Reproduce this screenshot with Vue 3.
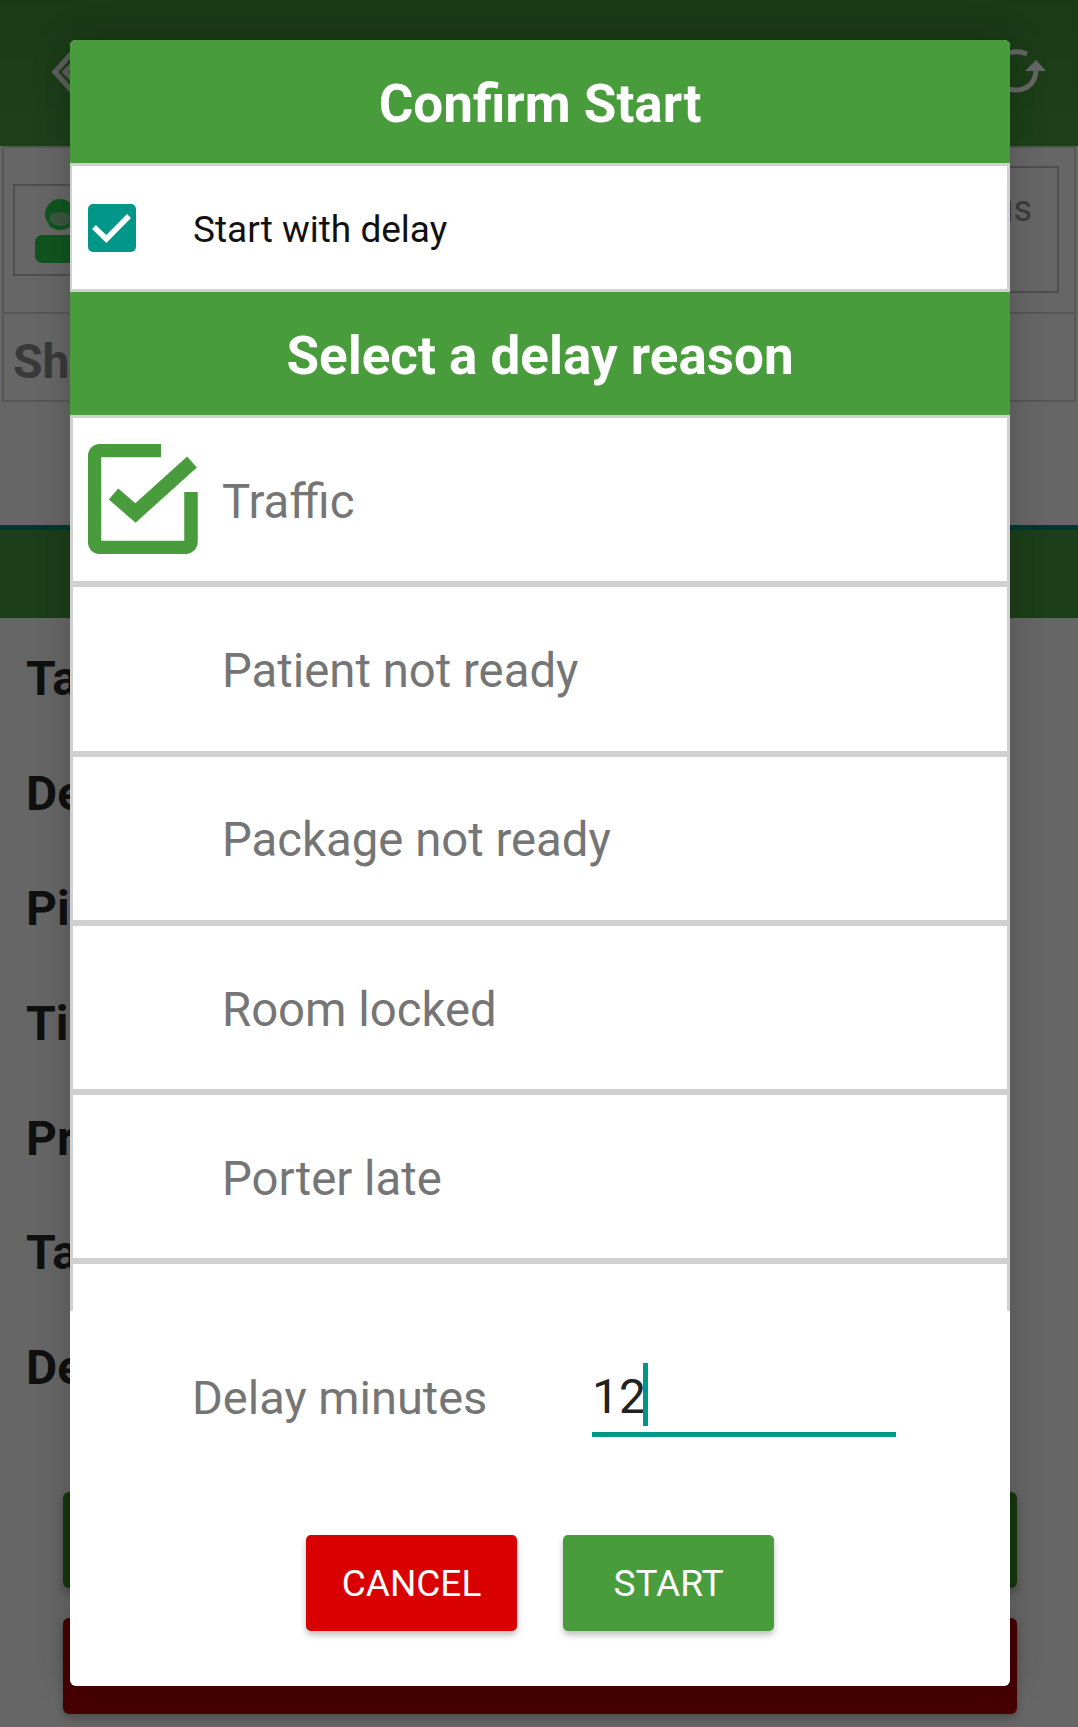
<script setup>
const behindLabels = ['Ta', 'De', 'Pi', 'Ti', 'Pr', 'Ta', 'De']
const reasons = [
  { label: 'Traffic', checked: true },
  { label: 'Patient not ready', checked: false },
  { label: 'Package not ready', checked: false },
  { label: 'Room locked', checked: false },
  { label: 'Porter late', checked: false },
]
</script>

<template>
  <div class="screen">
    <div class="page">
      <header class="appbar">
        <svg class="back" viewBox="0 0 22 44" width="22" height="44">
          <path d="M20 3 3 22l17 19M20 15l-7 7 7 7" fill="none" stroke="#e6f0e6" stroke-width="5" />
        </svg>
        <svg class="refresh" viewBox="0 0 50 50" width="50" height="50">
          <path d="M10 8q8-3 17 1M8 44c16 4 28-4 28-20" fill="none" stroke="#fff" stroke-width="5" />
          <path d="M36 15 25 26h21z" fill="#fff" />
        </svg>
      </header>
      <section class="profile">
        <div class="photo">
          <svg viewBox="0 0 50 70" width="50" height="70">
            <circle cx="30" cy="19" r="15" fill="#2ad44e" />
            <ellipse cx="30" cy="24" rx="11" ry="7" fill="#9ad8a8" />
            <path d="M19 25q11 13 22 0v6q-11 8-22 0z" fill="#2ad44e" />
            <rect x="5" y="40" width="50" height="28" rx="7" fill="#2ad44e" />
          </svg>
        </div>
        <div class="status">us</div>
      </section>
      <section class="shift">Sh</section>
      <div class="spacer"></div>
      <div class="band"></div>
      <ul class="details">
        <li v-for="(label, i) in behindLabels" :key="i">{{ label }}</li>
      </ul>
      <div class="bg-actions">
        <div class="bg-green"></div>
        <div class="bg-red"></div>
      </div>
    </div>

    <div class="scrim"></div>

    <div class="dialog">
      <h2 class="title">Confirm Start</h2>
      <div class="bordered delay-row">
        <span class="box">
          <svg viewBox="0 0 48 48" width="48" height="48">
            <path d="M6 23 18.300 35 41 12" fill="none" stroke="#fff" stroke-width="5.500" />
          </svg>
        </span>
        <span class="delay-text">Start with delay</span>
      </div>
      <h2 class="title">Select a delay reason</h2>
      <ul class="reasons">
        <li v-for="reason in reasons" :key="reason.label" class="reason">
          <svg v-if="reason.checked" class="tick" viewBox="0 0 110 110" width="110" height="110">
            <path d="M73 6.500H13Q6.500 6.500 6.500 13v84q0 6.500 6.500 6.500h83q7 0 7-6.500V48" fill="none" stroke="#489c3c" stroke-width="13.500" />
            <path d="M25.500 50 47.500 69 104 18" fill="none" stroke="#489c3c" stroke-width="14.500" />
          </svg>
          <span class="reason-text">{{ reason.label }}</span>
        </li>
      </ul>
      <div class="minutes">
        <span class="minutes-label">Delay minutes</span>
        <div class="field"><span>12</span><i class="caret"></i></div>
      </div>
      <div class="buttons">
        <button class="btn btn-cancel">CANCEL</button>
        <button class="btn btn-start">START</button>
      </div>
    </div>
  </div>
</template>

<style>
html, body { margin: 0; background: #666; }
</style>

<style scoped>
.screen {
  position: relative;
  width: 1078px;
  height: 1727px;
  overflow: hidden;
  font-family: Roboto, "Liberation Sans", sans-serif;
}
.page {
  display: flex;
  flex-direction: column;
  height: 100%;
  background: #fff;
}
.appbar {
  height: 146px;
  flex: none;
  background: linear-gradient(#429238, #4aa040);
  display: flex;
  justify-content: space-between;
  align-items: center;
  box-sizing: border-box;
  padding: 0 28px 0 52px;
}
.back { margin-bottom: 2px; }
.refresh { margin-bottom: 6px; }
.profile {
  height: 168px;
  flex: none;
  box-sizing: border-box;
  margin: 0 2px;
  border: 2px solid #d8d8d8;
  display: flex;
  justify-content: space-between;
  align-items: flex-start;
  padding: 18px 15px 0 9px;
}
.photo {
  width: 120px;
  height: 92px;
  margin-top: 18px;
  border: 2px solid #c4c4c4;
  box-sizing: border-box;
  display: flex;
  align-items: flex-start;
  padding: 9px 0 0 15px;
}
.status {
  width: 100px;
  height: 127px;
  border: 2px solid #c4c4c4;
  box-sizing: border-box;
  text-align: right;
  padding: 20px 25px 0 0;
  font-size: 36px;
  line-height: 42px;
  color: #969696;
}
.shift {
  height: 88px;
  flex: none;
  box-sizing: border-box;
  margin: 0 2px;
  border: 2px solid #d8d8d8;
  border-top: 0;
  padding: 20px 9px;
  font-weight: 700;
  font-size: 48px;
  line-height: 56px;
  color: #909090;
}
.spacer { height: 123px; flex: none; }
.band {
  height: 93px;
  flex: none;
  background: #489c3c;
  border-top: 5px solid #0a8a7c;
  box-sizing: border-box;
}
.details {
  list-style: none;
  margin: 0;
  padding: 34px 0 0 26px;
  flex: none;
}
.details li {
  height: 114.9px;
  font-weight: 700;
  font-size: 48px;
  line-height: 54px;
  color: #2a2a2a;
}
.bg-actions {
  flex: none;
  margin: 36px 61px 0 63px;
}
.bg-green {
  height: 96px;
  background: #378c25;
  border-radius: 6px;
  margin-bottom: 30px;
  box-shadow: 0 4px 8px rgba(0, 0, 0, .25);
}
.bg-red {
  height: 96px;
  background: #b20000;
  border-radius: 6px;
  box-shadow: 0 4px 8px rgba(0, 0, 0, .25);
}
.scrim {
  position: absolute;
  inset: 0;
  background: rgba(0, 0, 0, .6);
}
.dialog {
  position: absolute;
  left: 70px;
  top: 40px;
  width: 940px;
  height: 1646px;
  background: #fff;
  border-radius: 6px;
  overflow: hidden;
  box-shadow: 0 0 36px rgba(0, 0, 0, .22);
}
.title {
  margin: 0;
  height: 123px;
  background: #489c3c;
  color: #fff;
  font-weight: 700;
  font-size: 53px;
  text-align: center;
  line-height: 129px;
}
.bordered {
  border-left: 2px solid #d0d0d0;
  border-right: 3px solid #d0d0d0;
}
.delay-row {
  height: 129px;
  box-sizing: border-box;
  border-top: 3px solid #d0d0d0;
  border-bottom: 3px solid #d0d0d0;
  display: flex;
  align-items: center;
  padding-left: 16px;
}
.box {
  width: 48px;
  height: 48px;
  border-radius: 5px;
  background: #009688;
  display: flex;
  flex: none;
}
.delay-text {
  margin-left: 57px;
  margin-top: 4px;
  font-size: 37px;
  color: #111;
}
.reasons {
  list-style: none;
  margin: 0;
  padding: 0;
  border-left: 3px solid #d0d0d0;
  border-right: 3px solid #d0d0d0;
  border-top: 3px solid #d0d0d0;
  height: 896px;
  box-sizing: border-box;
}
.reason {
  position: relative;
  height: 169.3px;
  box-sizing: border-box;
  border-bottom: 6px solid #d0d0d0;
  display: flex;
  align-items: center;
  padding-left: 149px;
}
.tick {
  position: absolute;
  left: 15px;
  top: 26px;
}
.reason-text {
  font-size: 47.3px;
  color: #757575;
  padding-top: 4px;
}
.minutes {
  display: flex;
  align-items: flex-end;
  padding-left: 122px;
  height: 126px;
}
.minutes-label {
  font-size: 47px;
  color: #757575;
  line-height: 56px;
  margin-bottom: 11px;
}
.field {
  position: relative;
  margin-left: auto;
  margin-right: 114px;
  width: 304px;
  height: 74px;
  box-sizing: border-box;
  border-bottom: 5px solid #009688;
  font-size: 48px;
  color: #222;
  line-height: 56px;
  padding-top: 6px;
}
.caret {
  position: absolute;
  left: 51px;
  top: 0;
  width: 5px;
  height: 63px;
  background: #009688;
}
.buttons {
  display: flex;
  gap: 46px;
  padding-left: 236px;
  margin-top: 98px;
}
.btn {
  height: 96px;
  width: 211px;
  border: 0;
  border-radius: 5px;
  color: #fff;
  font-family: inherit;
  font-size: 37px;
  box-shadow: 0 4px 6px rgba(0, 0, 0, .25);
}
.btn-cancel { background: #d80000; }
.btn-start { background: #489c3c; }
</style>
